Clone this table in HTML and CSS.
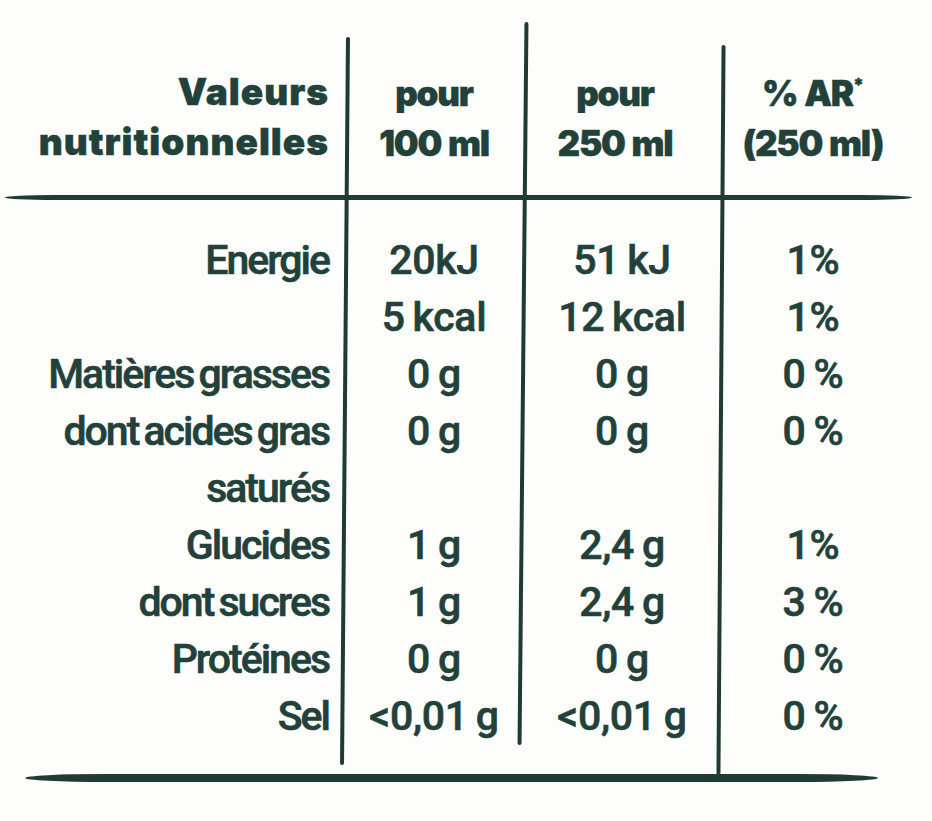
FILE: index.html
```html
<!DOCTYPE html>
<html lang="fr">
<head>
<meta charset="utf-8">
<title>Valeurs nutritionnelles</title>
<link rel="stylesheet" href="styles.css">
</head>
<body>
<div class="label">
  <div class="vline l1"></div>
  <div class="vline l2"></div>
  <div class="vline l3"></div>

  <div class="head lbl">Valeurs<br>nutritionnelles</div>
  <div class="head v1">pour<br>100 ml</div>
  <div class="head v2">pour<br>250 ml</div>
  <div class="head v3">% AR<sup>*</sup><br>(250 ml)</div>

  <div class="rule top"></div>

  <div class="cell lbl">Energie</div><div class="cell v1">20kJ</div><div class="cell v2">51 kJ</div><div class="cell v3">1%</div>
  <div class="cell lbl"></div><div class="cell v1">5 kcal</div><div class="cell v2">12 kcal</div><div class="cell v3">1%</div>
  <div class="cell lbl">Matières grasses</div><div class="cell v1">0 g</div><div class="cell v2">0 g</div><div class="cell v3">0 %</div>
  <div class="cell lbl">dont acides gras</div><div class="cell v1">0 g</div><div class="cell v2">0 g</div><div class="cell v3">0 %</div>
  <div class="cell lbl">saturés</div>
  <div class="cell lbl">Glucides</div><div class="cell v1">1 g</div><div class="cell v2">2,4 g</div><div class="cell v3">1%</div>
  <div class="cell lbl">dont sucres</div><div class="cell v1">1 g</div><div class="cell v2">2,4 g</div><div class="cell v3">3 %</div>
  <div class="cell lbl">Protéines</div><div class="cell v1">0 g</div><div class="cell v2">0 g</div><div class="cell v3">0 %</div>
  <div class="cell lbl">Sel</div><div class="cell v1">&lt;0,01 g</div><div class="cell v2">&lt;0,01 g</div><div class="cell v3">0 %</div>

  <div class="rule bottom"></div>
</div>
</body>
</html>
```

FILE: styles.css
```css
html, body {
  margin: 0;
  padding: 0;
  background: #fdfdfb;
}

.label {
  width: 932px;
  height: 821px;
  display: grid;
  grid-template-columns: 343px 4px 174px 4px 194px 4px 180px 1fr;
  grid-template-rows: 195px 37px repeat(9, 57px) 29px 8px;
  color: #22413a;
}

.lbl { grid-column: 1; text-align: right; padding-right: 14px; }
.v1 { grid-column: 3; text-align: center; }
.v2 { grid-column: 5; text-align: center; }
.v3 { grid-column: 7; text-align: center; }

.head {
  grid-row: 1;
  font-family: "Inter", "DejaVu Sans", sans-serif;
  font-weight: 900;
  font-size: 35px;
  line-height: 50px;
  letter-spacing: -1.2px;
  word-spacing: 1px;
  padding-top: 68px;
  -webkit-text-stroke: 0.4px currentColor;
}
.head.lbl { font-size: 37px; letter-spacing: 1px; padding-top: 67px; }
.head.v2 { padding-right: 14px; }
.head sup {
  font-size: 18px;
  line-height: 0;
  vertical-align: 15px;
  letter-spacing: 0;
}

.cell {
  font-family: "Roboto", "Noto Sans", sans-serif;
  font-weight: 500;
  font-size: 41px;
  line-height: 57px;
  letter-spacing: -1.8px;
  word-spacing: -3px;
  white-space: nowrap;
  -webkit-text-stroke: 0.6px currentColor;
}
.cell.lbl { letter-spacing: -2px; }
.cell.v1, .cell.v2, .cell.v3 {
  letter-spacing: -0.3px;
  word-spacing: -2px;
}

.vline {
  grid-row: 1 / -1;
  background: #1f3b33;
  border-radius: 2px;
}
.l1 { grid-column: 2; margin: 37px 0 17px; transform: rotate(0.47deg); }
.l2 { grid-column: 4; margin: 22px 0 37px; transform: rotate(0.55deg); }
.l3 { grid-column: 6; margin: 45px 0 7px; transform: rotate(0.4deg); }

.rule {
  grid-column: 1 / -1;
  background: #1f3b33;
}
.rule.top {
  grid-row: 2;
  align-self: start;
  height: 5px;
  margin: 0 20px 0 5px;
  border-radius: 60px / 3px;
}
.rule.bottom {
  grid-row: 13;
  height: 8px;
  margin: 0 54px 0 25px;
  border-radius: 80px / 4px;
}
```
